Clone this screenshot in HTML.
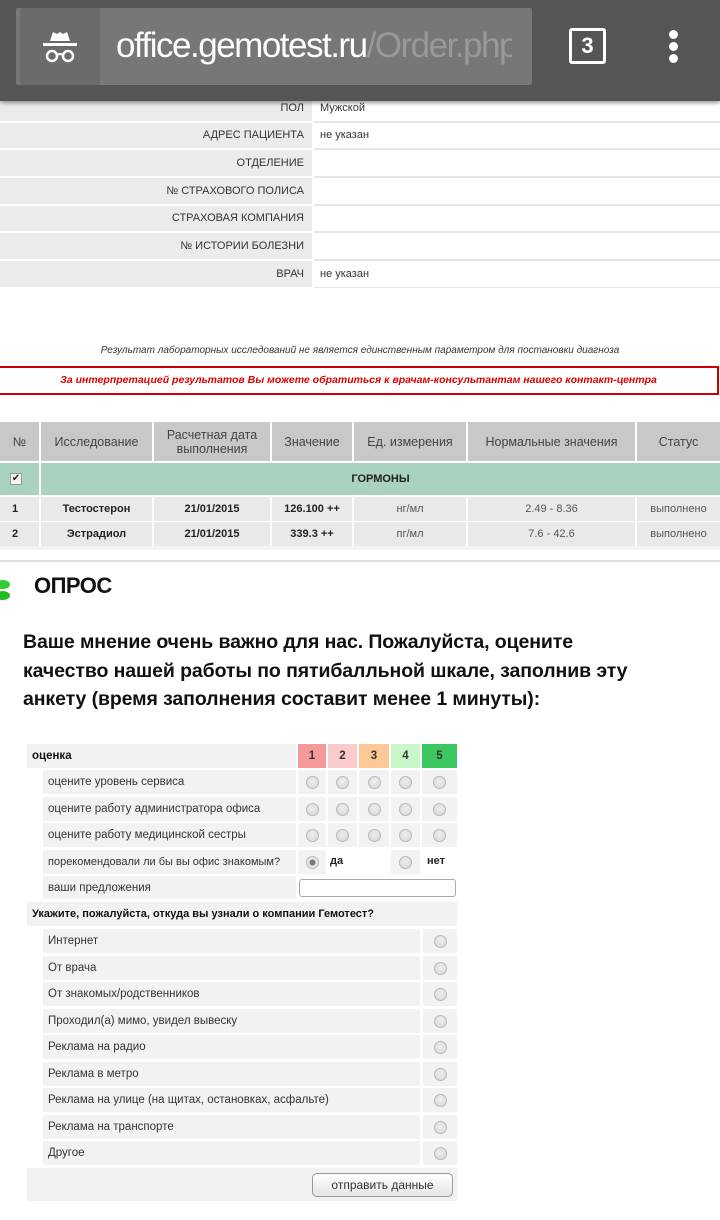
<!DOCTYPE html>
<html><head><meta charset="utf-8">
<style>
*{margin:0;padding:0;box-sizing:border-box}
body{width:720px;height:1220px;position:relative;background:#fff;font-family:"Liberation Sans",sans-serif;color:#222;overflow:hidden}
.a{position:absolute}
.n{font-family:"Liberation Sans",sans-serif}
.lab{position:absolute;left:0;width:312px;background:#ebebeb;text-align:right;padding-right:8px;font-size:11px;color:#333}
.val{position:absolute;left:314px;right:0;background:#fff;font-size:11px;padding-left:6px;color:#333}
.th{position:absolute;top:422px;height:39px;background:#c8c8c8;color:#444;font-size:12.5px;display:flex;align-items:center;justify-content:center;text-align:center;line-height:14px}
.td{position:absolute;height:24px;background:#e9e9e9;font-size:11px;display:flex;align-items:center;justify-content:center}
.c{position:absolute;background:#f2f2f2;font-family:"Liberation Sans",sans-serif;font-size:11.5px;color:#333;display:flex;align-items:center}
.r{width:13px;height:13px;border-radius:50%;border:1px solid #b8b8b8;background:radial-gradient(circle at 50% 40%,#eee,#d6d6d6)}
</style></head><body>
<div class="a" style="left:0;top:0;width:720px;height:101px;background:#555;box-shadow:0 2px 4px rgba(0,0,0,.4);z-index:2">
  <div class="a" style="left:16px;top:8px;width:516px;height:77px;background:#777;border-radius:2px"></div>
  <div class="a" style="left:20px;top:8px;width:80px;height:77px;background:#6b6b6b"></div>
  <svg class="a" style="left:40px;top:26px" width="40" height="40" viewBox="0 0 40 40" fill="none" stroke="#fff">
    <path d="M10 15 L13 6 L17 8 L20 6 L23 8 L27 6 L30 15 Z" fill="#fff" stroke="none"/>
    <rect x="3" y="17" width="34" height="3" fill="#fff" stroke="none"/>
    <circle cx="12" cy="30" r="5" stroke-width="2.5"/><circle cx="28" cy="30" r="5" stroke-width="2.5"/>
    <path d="M17 29 Q20 27 23 29" stroke-width="2"/>
  </svg>
  <div class="a n" style="left:116px;top:26px;font-size:35px;color:#fff;white-space:nowrap;width:396px;overflow:hidden;letter-spacing:-1.5px">office.gemotest.ru<span style="color:#999">/Order.php</span></div>
  <div class="a" style="left:569px;top:28px;width:37px;height:36px;border:3px solid #fff;border-radius:3px;color:#fff;font-size:22px;font-weight:bold;text-align:center;line-height:30px">3</div>
  <div class="a" style="left:669px;top:30px;width:9px;height:9px;border-radius:50%;background:#fff"></div>
  <div class="a" style="left:669px;top:42px;width:9px;height:9px;border-radius:50%;background:#fff"></div>
  <div class="a" style="left:669px;top:54px;width:9px;height:9px;border-radius:50%;background:#fff"></div>
</div>
<div class="lab" style="top:98px;height:23px;line-height:20px">ПОЛ</div><div class="val" style="top:98px;height:23px;line-height:20px">Мужской</div>
<div class="lab" style="top:123px;height:25px;line-height:25px">АДРЕС ПАЦИЕНТА</div><div class="val" style="top:123px;height:25px;line-height:25px">не указан</div>
<div class="lab" style="top:150px;height:26px;line-height:26px">ОТДЕЛЕНИЕ</div><div class="val" style="top:150px;height:26px"></div>
<div class="lab" style="top:178px;height:26px;line-height:26px">№ СТРАХОВОГО ПОЛИСА</div><div class="val" style="top:178px;height:26px"></div>
<div class="lab" style="top:206px;height:25px;line-height:25px">СТРАХОВАЯ КОМПАНИЯ</div><div class="val" style="top:206px;height:25px"></div>
<div class="lab" style="top:233px;height:26px;line-height:26px">№ ИСТОРИИ БОЛЕЗНИ</div><div class="val" style="top:233px;height:26px"></div>
<div class="lab" style="top:261px;height:26px;line-height:26px">ВРАЧ</div><div class="val" style="top:261px;height:26px;line-height:26px">не указан</div>
<div class="a" style="left:314px;right:0;top:121px;height:2px;background:#e6e6e6"></div>
<div class="a" style="left:314px;right:0;top:148px;height:2px;background:#e6e6e6"></div>
<div class="a" style="left:314px;right:0;top:176px;height:2px;background:#e6e6e6"></div>
<div class="a" style="left:314px;right:0;top:204px;height:2px;background:#e6e6e6"></div>
<div class="a" style="left:314px;right:0;top:231px;height:2px;background:#e6e6e6"></div>
<div class="a" style="left:314px;right:0;top:259px;height:2px;background:#e6e6e6"></div>
<div class="a" style="left:314px;right:0;top:287px;height:1px;background:#e6e6e6"></div>

<div class="a" style="left:0;width:720px;top:345px;text-align:center;font-size:10px;font-style:italic;color:#333">Результат лабораторных исследований не является единственным параметром для постановки диагноза</div>
<div class="a" style="left:-2px;width:721px;top:366px;height:29px;border:2px solid #c80000;text-align:center;font-size:10.5px;font-style:italic;font-weight:bold;color:#d00;line-height:25px">За интерпретацией результатов Вы можете обратиться к врачам-консультантам нашего контакт-центра</div>

<div class="th" style="left:0;width:39px">№</div>
<div class="th" style="left:41px;width:111px">Исследование</div>
<div class="th" style="left:154px;width:116px">Расчетная дата<br>выполнения</div>
<div class="th" style="left:272px;width:80px">Значение</div>
<div class="th" style="left:354px;width:112px">Ед. измерения</div>
<div class="th" style="left:468px;width:167px">Нормальные значения</div>
<div class="th" style="left:637px;width:83px">Статус</div>
<div class="a" style="left:0;top:463px;width:39px;height:32px;background:#a9d3bf"></div>
<div class="a" style="left:10px;top:473px;width:12px;height:12px;background:#f4f4f4;border:1px solid #999;font-size:10px;line-height:10px;text-align:center">✔</div>
<div class="a" style="left:41px;top:463px;width:679px;height:32px;background:#a9d3bf;text-align:center;line-height:32px;font-size:11px;font-weight:bold">ГОРМОНЫ</div>
<div class="td" style="left:0;top:497px;width:39px;font-weight:bold;justify-content:flex-start;padding-left:12px">1</div>
<div class="td" style="left:41px;top:497px;width:111px;font-weight:bold">Тестостерон</div>
<div class="td" style="left:154px;top:497px;width:116px;font-weight:bold">21/01/2015</div>
<div class="td" style="left:272px;top:497px;width:80px;font-weight:bold">126.100 ++</div>
<div class="td" style="left:354px;top:497px;width:112px;color:#555">нг/мл</div>
<div class="td" style="left:468px;top:497px;width:167px;color:#555">2.49 - 8.36</div>
<div class="td" style="left:637px;top:497px;width:83px;color:#555">выполнено</div>
<div class="td" style="left:0;top:522px;width:39px;font-weight:bold;justify-content:flex-start;padding-left:12px">2</div>
<div class="td" style="left:41px;top:522px;width:111px;font-weight:bold">Эстрадиол</div>
<div class="td" style="left:154px;top:522px;width:116px;font-weight:bold">21/01/2015</div>
<div class="td" style="left:272px;top:522px;width:80px;font-weight:bold">339.3 ++</div>
<div class="td" style="left:354px;top:522px;width:112px;color:#555">пг/мл</div>
<div class="td" style="left:468px;top:522px;width:167px;color:#555">7.6 - 42.6</div>
<div class="td" style="left:637px;top:522px;width:83px;color:#555">выполнено</div>
<div class="a" style="left:0;top:546px;width:720px;height:4px;background:#f3f3f3"></div>
<div class="a" style="left:0;top:560px;width:720px;height:2px;background:#ddd"></div>

<div class="a" style="left:-4px;top:580px;width:14px;height:9px;border-radius:50%;background:#3c3"></div>
<div class="a" style="left:-4px;top:591px;width:14px;height:9px;border-radius:50%;background:#2b2"></div>
<div class="a" style="left:34px;top:573px;font-size:22px;font-weight:bold;color:#111;letter-spacing:-0.5px">ОПРОС</div>
<div class="a" style="left:23px;top:628px;font-size:19.5px;font-weight:bold;line-height:28.5px;color:#111;white-space:nowrap;letter-spacing:-0.1px">Ваше мнение очень важно для нас. Пожалуйста, оцените<br>качество нашей работы по пятибалльной шкале, заполнив эту<br>анкету (время заполнения составит менее 1 минуты):</div>

<div class="c" style="left:27px;top:744px;width:269px;height:24px;font-weight:bold;padding-left:5px;color:#111">оценка</div>
<div class="c" style="left:298px;top:744px;width:28px;height:24px;background:#f59a9a;justify-content:center;font-weight:bold">1</div>
<div class="c" style="left:328px;top:744px;width:29px;height:24px;background:#fbcaca;justify-content:center;font-weight:bold">2</div>
<div class="c" style="left:359px;top:744px;width:30px;height:24px;background:#fbc896;justify-content:center;font-weight:bold">3</div>
<div class="c" style="left:391px;top:744px;width:29px;height:24px;background:#c9f7c9;justify-content:center;font-weight:bold">4</div>
<div class="c" style="left:422px;top:744px;width:35px;height:24px;background:#3cc860;justify-content:center;font-weight:bold">5</div>

<div class="c" style="left:43px;top:770px;width:253px;height:24px;padding-left:5px">оцените уровень сервиса</div>
<div class="c" style="left:43px;top:797px;width:253px;height:24px;padding-left:5px">оцените работу администратора офиса</div>
<div class="c" style="left:43px;top:823px;width:253px;height:24px;padding-left:5px">оцените работу медицинской сестры</div>
<div class="c" style="left:43px;top:850px;width:253px;height:24px;padding-left:5px;font-size:11px">порекомендовали ли бы вы офис знакомым?</div>
<div class="c" style="left:43px;top:876px;width:253px;height:23px;padding-left:5px">ваши предложения</div>

<div class="c" style="left:298px;top:850px;width:28px;height:24px;justify-content:center"><div class="r" style="background:radial-gradient(circle,#777 0 2.5px,#e6e6e6 3.5px)"></div></div>
<div class="a n" style="left:330px;top:855px;font-size:11px;font-weight:bold">да</div>
<div class="c" style="left:391px;top:850px;width:29px;height:24px;justify-content:center"><div class="r"></div></div>
<div class="a n" style="left:427px;top:855px;font-size:11px;font-weight:bold">нет</div>
<div class="a" style="left:299px;top:879px;width:157px;height:18px;border:1px solid #aaa;border-radius:3px;background:#fff"></div>

<div class="c" style="left:27px;top:902px;width:430px;height:24px;padding-left:5px;font-weight:bold;color:#111;font-size:11px">Укажите, пожалуйста, откуда вы узнали о компании Гемотест?</div>

<div class="c" style="left:43px;top:929px;width:377px;height:24px;padding-left:5px">Интернет</div>
<div class="c" style="left:43px;top:956px;width:377px;height:24px;padding-left:5px">От врача</div>
<div class="c" style="left:43px;top:982px;width:377px;height:24px;padding-left:5px">От знакомых/родственников</div>
<div class="c" style="left:43px;top:1009px;width:377px;height:24px;padding-left:5px">Проходил(а) мимо, увидел вывеску</div>
<div class="c" style="left:43px;top:1035px;width:377px;height:24px;padding-left:5px">Реклама на радио</div>
<div class="c" style="left:43px;top:1062px;width:377px;height:24px;padding-left:5px">Реклама в метро</div>
<div class="c" style="left:43px;top:1088px;width:377px;height:24px;padding-left:5px">Реклама на улице (на щитах, остановках, асфальте)</div>
<div class="c" style="left:43px;top:1115px;width:377px;height:24px;padding-left:5px">Реклама на транспорте</div>
<div class="c" style="left:43px;top:1141px;width:377px;height:24px;padding-left:5px">Другое</div>
<div class="c" style="left:423px;top:929px;width:34px;height:24px;justify-content:center"><div class="r"></div></div>
<div class="c" style="left:423px;top:956px;width:34px;height:24px;justify-content:center"><div class="r"></div></div>
<div class="c" style="left:423px;top:982px;width:34px;height:24px;justify-content:center"><div class="r"></div></div>
<div class="c" style="left:423px;top:1009px;width:34px;height:24px;justify-content:center"><div class="r"></div></div>
<div class="c" style="left:423px;top:1035px;width:34px;height:24px;justify-content:center"><div class="r"></div></div>
<div class="c" style="left:423px;top:1062px;width:34px;height:24px;justify-content:center"><div class="r"></div></div>
<div class="c" style="left:423px;top:1088px;width:34px;height:24px;justify-content:center"><div class="r"></div></div>
<div class="c" style="left:423px;top:1115px;width:34px;height:24px;justify-content:center"><div class="r"></div></div>
<div class="c" style="left:423px;top:1141px;width:34px;height:24px;justify-content:center"><div class="r"></div></div>

<div class="c" style="left:27px;top:1168px;width:430px;height:33px"></div>
<div class="a n" style="left:312px;top:1173px;width:141px;height:24px;border:1px solid #999;border-radius:5px;background:linear-gradient(#fff,#e4e4e4);font-size:12px;text-align:center;line-height:22px;color:#333">отправить данные</div>

<div class="c" style="left:298px;top:770px;width:28px;height:24px;justify-content:center"><div class="r"></div></div>
<div class="c" style="left:328px;top:770px;width:29px;height:24px;justify-content:center"><div class="r"></div></div>
<div class="c" style="left:359px;top:770px;width:30px;height:24px;justify-content:center"><div class="r"></div></div>
<div class="c" style="left:391px;top:770px;width:29px;height:24px;justify-content:center"><div class="r"></div></div>
<div class="c" style="left:422px;top:770px;width:35px;height:24px;justify-content:center"><div class="r"></div></div>
<div class="c" style="left:298px;top:797px;width:28px;height:24px;justify-content:center"><div class="r"></div></div>
<div class="c" style="left:328px;top:797px;width:29px;height:24px;justify-content:center"><div class="r"></div></div>
<div class="c" style="left:359px;top:797px;width:30px;height:24px;justify-content:center"><div class="r"></div></div>
<div class="c" style="left:391px;top:797px;width:29px;height:24px;justify-content:center"><div class="r"></div></div>
<div class="c" style="left:422px;top:797px;width:35px;height:24px;justify-content:center"><div class="r"></div></div>
<div class="c" style="left:298px;top:823px;width:28px;height:24px;justify-content:center"><div class="r"></div></div>
<div class="c" style="left:328px;top:823px;width:29px;height:24px;justify-content:center"><div class="r"></div></div>
<div class="c" style="left:359px;top:823px;width:30px;height:24px;justify-content:center"><div class="r"></div></div>
<div class="c" style="left:391px;top:823px;width:29px;height:24px;justify-content:center"><div class="r"></div></div>
<div class="c" style="left:422px;top:823px;width:35px;height:24px;justify-content:center"><div class="r"></div></div>
</body></html>
